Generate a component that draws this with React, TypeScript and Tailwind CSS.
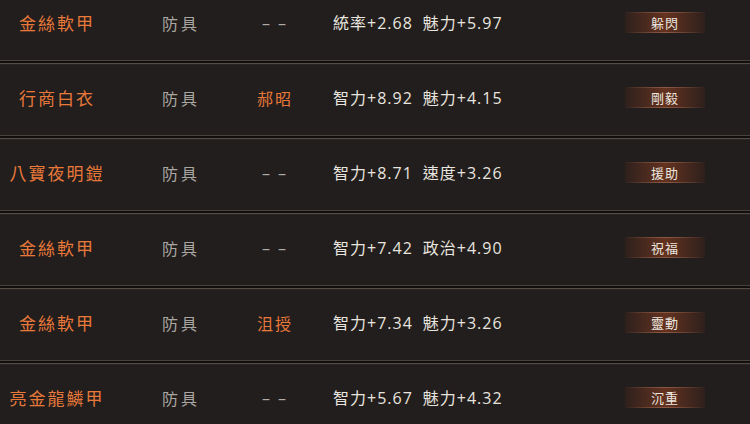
import React from "react";

type Row = { name: string; type: string; who: string; a: string; b: string; badge: string };

const rows: Row[] = [
  { name: "金絲軟甲", type: "防具", who: "--", a: "統率+2.68", b: "魅力+5.97", badge: "躲閃" },
  { name: "行商白衣", type: "防具", who: "郝昭", a: "智力+8.92", b: "魅力+4.15", badge: "剛毅" },
  { name: "八寶夜明鎧", type: "防具", who: "--", a: "智力+8.71", b: "速度+3.26", badge: "援助" },
  { name: "金絲軟甲", type: "防具", who: "--", a: "智力+7.42", b: "政治+4.90", badge: "祝福" },
  { name: "金絲軟甲", type: "防具", who: "沮授", a: "智力+7.34", b: "魅力+3.26", badge: "靈動" },
  { name: "亮金龍鱗甲", type: "防具", who: "--", a: "智力+5.67", b: "魅力+4.32", badge: "沉重" },
];

const cjk = { fontFamily: '"Noto Sans CJK TC", "Noto Sans CJK SC", sans-serif' };
const mixed = { fontFamily: '"Open Sans", "Noto Sans CJK TC", sans-serif' };

function Separator() {
  return (
    <div className="flex flex-col">
      <div className="h-px bg-[#4a423d]" />
      <div className="h-[2px] bg-[#110f0e]" />
      <div className="h-px bg-[#564c46]" />
      <div className="h-px bg-[#2a2523]" />
    </div>
  );
}

export default function App() {
  return (
    <div className="w-[750px] h-[424px] overflow-hidden bg-[#221e1d]">
      <div className="-mt-[10px] flex flex-col">
        {rows.map((r, i) => (
          <div key={i} className="flex flex-col">
            <div className="flex h-[70px] items-center pb-[5px]">
              <div
                className="w-[114px] text-center text-[17px] tracking-[2px] text-[#e8793a]"
                style={cjk}
              >
                {r.name}
              </div>
              <div
                className="w-[134px] text-center text-[16px] tracking-[3px] text-[#aaa6a2]"
                style={cjk}
              >
                {r.type}
              </div>
              <div
                className={
                  "w-[54px] text-center text-[16px] tracking-[2px] " +
                  (r.who === "--" ? "text-[#b0aca8]" : "text-[#e8793a]")
                }
                style={r.who === "--" ? mixed : cjk}
              >
                {r.who === "--" ? "– –" : r.who}
              </div>
              <div
                className="ml-[31px] flex w-[292px] gap-[10px] text-[16px] tracking-[1px] text-[#e8e4df]"
                style={mixed}
              >
                <span>{r.a}</span>
                <span>{r.b}</span>
              </div>
              <div className="relative flex h-[21px] w-[80px] items-center justify-center bg-gradient-to-r from-[#2e201c] via-[#65321f] to-[#2e201c]">
                <div className="absolute inset-x-0 top-0 h-px bg-gradient-to-r from-transparent via-[#8a5a45] to-transparent" />
                <div className="absolute inset-x-0 bottom-0 h-px bg-gradient-to-r from-transparent via-[#8a5a45] to-transparent" />
                <span className="relative text-[13px] tracking-[1px] text-[#ece6df]" style={cjk}>
                  {r.badge}
                </span>
              </div>
            </div>
            <Separator />
          </div>
        ))}
      </div>
    </div>
  );
}
